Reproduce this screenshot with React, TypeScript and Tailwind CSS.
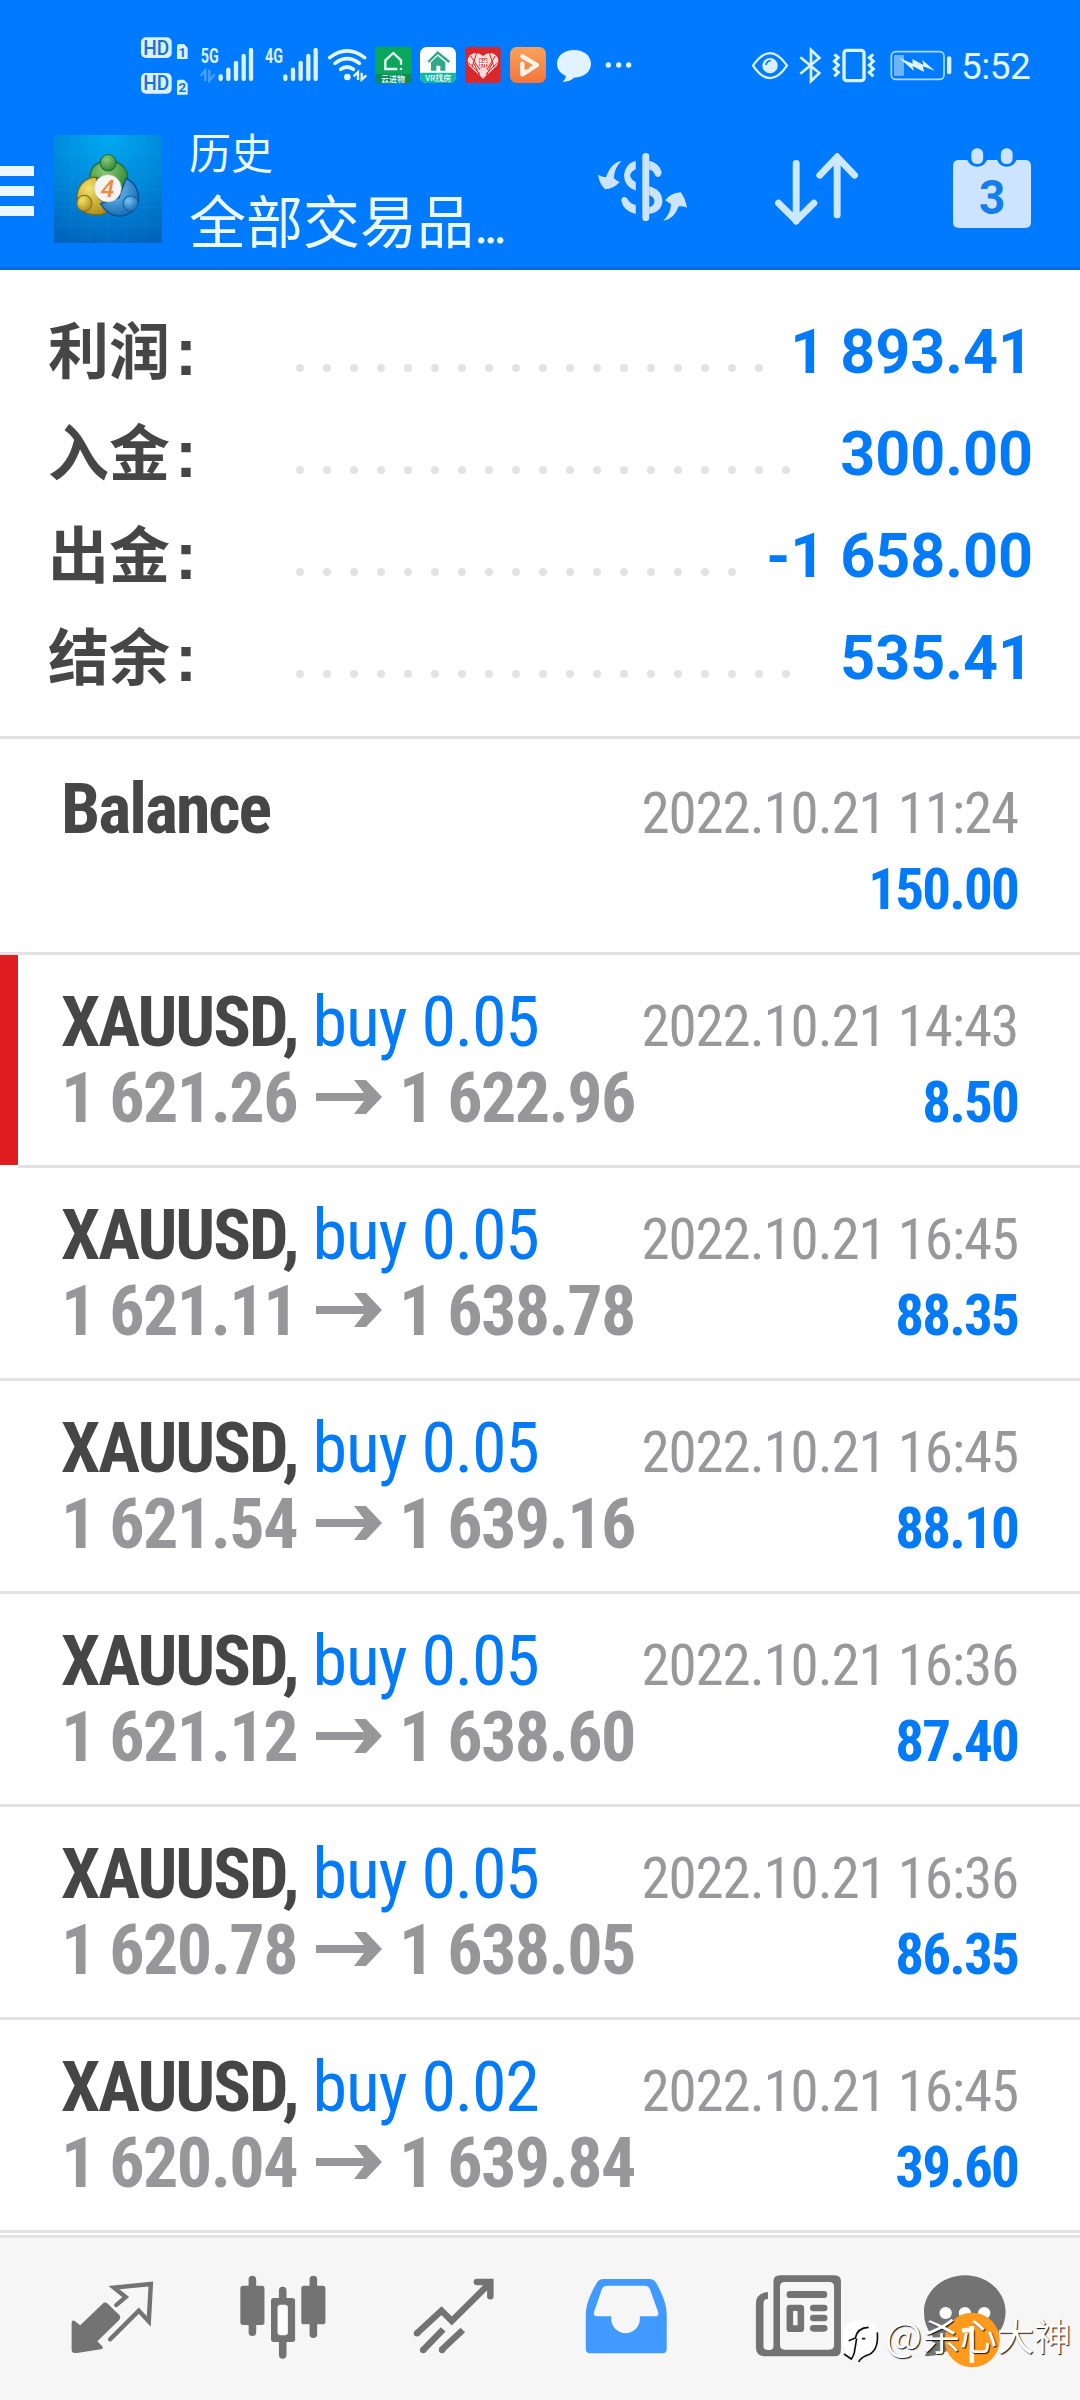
import React from 'react'

interface SummaryItem {
  label: string
  value: string
  dots: number
}

interface Deal {
  id: number
  volume: string
  open: string
  close: string
  time: string
  profit: string
  marked?: boolean
}

const SUMMARY: SummaryItem[] = [
  { label: '利润', value: '1 893.41', dots: 18 },
  { label: '入金', value: '300.00', dots: 19 },
  { label: '出金', value: '-1 658.00', dots: 17 },
  { label: '结余', value: '535.41', dots: 19 },
]

const DEALS: Deal[] = [
  { id: 1, volume: '0.05', open: '1 621.26', close: '1 622.96', time: '2022.10.21 14:43', profit: '8.50', marked: true },
  { id: 2, volume: '0.05', open: '1 621.11', close: '1 638.78', time: '2022.10.21 16:45', profit: '88.35' },
  { id: 3, volume: '0.05', open: '1 621.54', close: '1 639.16', time: '2022.10.21 16:45', profit: '88.10' },
  { id: 4, volume: '0.05', open: '1 621.12', close: '1 638.60', time: '2022.10.21 16:36', profit: '87.40' },
  { id: 5, volume: '0.05', open: '1 620.78', close: '1 638.05', time: '2022.10.21 16:36', profit: '86.35' },
  { id: 6, volume: '0.02', open: '1 620.04', close: '1 639.84', time: '2022.10.21 16:45', profit: '39.60' },
]

// 状态栏图标，画布高度统一 90px，坐标为 3 倍
function StatusIcon({ x, w, children }: { x: number; w: number; children: React.ReactNode }) {
  return (
    <svg width={w} height={90} viewBox={`${x} 0 ${w * 3} 270`} className="shrink-0" fill="none">
      {children}
    </svg>
  )
}

function SignalBars({ x }: { x: number }) {
  return (
    <g stroke="#d9f0ff" strokeWidth="13" strokeLinecap="round">
      <path d={`M${x} 169V177M${x + 23} 149V177M${x + 46} 129V177M${x + 69} 108V177M${x + 91} 90V177`} />
    </g>
  )
}

function HdIcon() {
  return (
    <StatusIcon x={60} w={55}>
      {[
        { y: 52, n: '1' },
        { y: 159, n: '2' },
      ].map((item) => (
        <g key={item.n}>
          <rect x="63" y={item.y} width="92" height="62" rx="15" fill="#d9f0ff" />
          <text
            x="109"
            y={item.y + 52}
            textAnchor="middle"
            textLength="78"
            lengthAdjust="spacingAndGlyphs"
            fontSize="60"
            className="font-['Roboto',sans-serif] font-medium"
            fill="#1672d4"
          >
            HD
          </text>
          <path d={`M171 ${item.y + 27}q0-7 7-7h14l11 12v33h-32z`} fill="#d9f0ff" />
          <text
            x="187"
            y={item.y + 58}
            textAnchor="middle"
            fontSize="40"
            className="font-['Roboto',sans-serif] font-bold"
            fill="#1672d4"
          >
            {item.n}
          </text>
        </g>
      ))}
    </StatusIcon>
  )
}

function NetworkLabel({ x, children }: { x: number; children: string }) {
  return (
    <text
      x={x}
      y="129"
      fontSize="60"
      textLength="54"
      lengthAdjust="spacingAndGlyphs"
      className="font-['Roboto',sans-serif] font-bold"
      fill="#d9f0ff"
    >
      {children}
    </text>
  )
}

function StatusBar() {
  return (
    <div className="flex h-[110px] items-start pt-5 pl-[140px]">
      <HdIcon />
      <StatusIcon x={225} w={65}>
        <NetworkLabel x={242}>5G</NetworkLabel>
        <path d="M242 167l14-16v32M268 149v32l16-18" stroke="#4a9fff" strokeWidth="7" />
        <SignalBars x={302} />
      </StatusIcon>
      <StatusIcon x={420} w={64}>
        <NetworkLabel x={435}>4G</NetworkLabel>
        <SignalBars x={496} />
      </StatusIcon>
      <StatusIcon x={612} w={48}>
        <g stroke="#e2f6ff" strokeWidth="11" strokeLinecap="round">
          <path d="M629 113Q681 72 734 113" />
          <path d="M645 130Q681 102 718 130" />
          <path d="M662 148Q681 134 700 148" />
        </g>
        <circle cx="682" cy="171" r="10" fill="#e2f6ff" />
        <path d="M701 169l13-13v24M725 158v21l14-13" stroke="#e2f6ff" strokeWidth="7" />
      </StatusIcon>

      {/* 通知应用图标 */}
      <StatusIcon x={-24} w={44}>
        <rect x="-15" y="80" width="110" height="110" rx="8" fill="#0aa65c" />
        <rect x="-15" y="162" width="110" height="28" rx="6" fill="#0b8a5a" />
        <path d="M63 134V121L40 99L16 121V147H52" stroke="#e8fff4" strokeWidth="7" />
        <circle cx="63" cy="147" r="4" fill="#e8fff4" />
        <text x="39" y="186" textAnchor="middle" fontSize="24" fill="#fff" className="font-['Noto_Sans_CJK_SC',sans-serif] font-medium">云进物</text>
      </StatusIcon>
      <StatusIcon x={108} w={45}>
        <rect x="120" y="81" width="108" height="108" rx="20" fill="#fff" />
        <path d="M120 158H228V169Q228 189 208 189H140Q120 189 120 169Z" fill="#12b8a4" />
        <path d="M153 152V127L173 108L196 127V152H181V137H169V152Z" fill="#2fa886" />
        <path d="M145 126L173 98L208 126" stroke="#2fa886" strokeWidth="7" />
        <text x="175" y="184" textAnchor="middle" fontSize="24" fill="#fff" className="font-['Noto_Sans_CJK_SC',sans-serif] font-medium">VR找房</text>
      </StatusIcon>
      <StatusIcon x={243} w={45}>
        <rect x="255" y="81" width="107" height="108" rx="10" fill="#d9272b" />
        <path d="M309 176L268 138Q257 121 270 106Q290 91 309 108Q329 91 348 106Q361 121 350 138Z" fill="#fbdcd8" />
        <path d="M272 108L300 150M346 108L320 150M265 128L300 162M353 128L318 162M290 98L276 142M328 98L342 142M300 170L282 130M318 170L336 130" stroke="#d9272b" strokeWidth="3" />
        <rect x="298" y="115" width="24" height="27" fill="#d9272b" />
        <text x="310" y="138" textAnchor="middle" fontSize="25" fill="#fff" className="font-['Noto_Sans_CJK_SC',sans-serif] font-bold">拼</text>
      </StatusIcon>
      <StatusIcon x={378} w={45}>
        <defs>
          <linearGradient id="play" x1="0" y1="0" x2="0" y2="1">
            <stop offset="0" stopColor="#f9a25c" />
            <stop offset="1" stopColor="#f4763b" />
          </linearGradient>
        </defs>
        <rect x="390" y="81" width="108" height="108" rx="20" fill="url(#play)" />
        <path d="M427 109L471 135L427 163V131" stroke="#fff5ea" strokeWidth="13" strokeLinejoin="round" strokeLinecap="round" />
        <path d="M443 130V148" stroke="#f58b49" strokeWidth="8" />
      </StatusIcon>
      <StatusIcon x={513} w={47}>
        <path d="M582 90C611 90 633 107 633 131C633 156 611 171 582 173Q570 184 548 186Q557 178 558 168C541 160 531 148 531 131C531 107 553 90 582 90Z" fill="#e1f3ff" />
      </StatusIcon>
      <StatusIcon x={654} w={38}>
        <g fill="#e1f3ff">
          <circle cx="685" cy="135" r="8" />
          <circle cx="716" cy="135" r="8" />
          <circle cx="746" cy="135" r="8" />
        </g>
      </StatusIcon>

      {/* 右侧系统图标 */}
      <div className="ml-[116px] flex">
        <StatusIcon x={66} w={44}>
          <path d="M69 137Q120 62 171 137Q120 212 69 137Z" stroke="#d9f0ff" strokeWidth="7" />
          <circle cx="120" cy="137" r="23" fill="#d9f0ff" />
          <path d="M108 135Q110 123 122 122" stroke="#007aff" strokeWidth="5" />
        </StatusIcon>
        <StatusIcon x={198} w={33}>
          <path d="M211 112L268 159L243 183V90L268 114L211 161" stroke="#d9f0ff" strokeWidth="8" />
        </StatusIcon>
        <StatusIcon x={297} w={57}>
          <rect x="342" y="91" width="60" height="91" rx="8" stroke="#d9f5ff" strokeWidth="10" />
          <path d="M313 103L325 113L313 124L325 135L313 147L325 157L313 169M430 103L418 113L430 124L418 135L430 147L418 157L430 169" stroke="#d9f5ff" strokeWidth="9" />
        </StatusIcon>
        <StatusIcon x={468} w={74}>
          <rect x="484" y="95" width="158" height="83" rx="13" stroke="#a8dcff" strokeWidth="5" />
          <rect x="492" y="105" width="30" height="63" rx="4" fill="#6db4ff" />
          <path d="M508 114L548 131L547 117L580 135L577 120L615 153L579 139L582 156L548 138L552 153Z" fill="#e2f6ff" />
          <rect x="651" y="109" width="13" height="54" rx="6" fill="#d9f0ff" />
        </StatusIcon>
        <span className="mt-[25px] ml-px font-['Roboto',sans-serif] text-[37px] leading-[44px] tracking-[-0.5px] text-[#e2f6ff]">
          5:52
        </span>
      </div>
    </div>
  )
}

function AppLogo() {
  return (
    <svg width="108" height="108" viewBox="157 73 313 326" preserveAspectRatio="none" className="mt-[25px] ml-5 shrink-0">
      <defs>
        <radialGradient id="bg" cx="0.5" cy="0" r="1.05">
          <stop offset="0" stopColor="#00aaf0" />
          <stop offset="0.55" stopColor="#0086d8" />
          <stop offset="1" stopColor="#0064be" />
        </radialGradient>
        <radialGradient id="green" cx="0.4" cy="0.3" r="0.8">
          <stop offset="0" stopColor="#8ccb78" />
          <stop offset="1" stopColor="#1f7d2a" />
        </radialGradient>
        <radialGradient id="gold" cx="0.35" cy="0.3" r="0.8">
          <stop offset="0" stopColor="#f2e26a" />
          <stop offset="1" stopColor="#a88612" />
        </radialGradient>
        <radialGradient id="azure" cx="0.35" cy="0.3" r="0.8">
          <stop offset="0" stopColor="#78c4f0" />
          <stop offset="1" stopColor="#0c62b0" />
        </radialGradient>
      </defs>
      <rect x="157" y="73" width="313" height="326" fill="url(#bg)" />
      <path d="M209 73V399M261 73V399M313 73V399M366 73V399M418 73V399M157 129H470M157 184H470M157 238H470M157 292H470M157 346H470" stroke="#46b8f0" strokeOpacity="0.18" strokeWidth="2" />
      <path d="M262 205C258 175 280 152 312 150C350 150 372 175 370 205C368 225 360 240 350 248L300 200Z" fill="url(#green)" stroke="#1c6a3a" strokeWidth="4" />
      <path d="M280 200C250 200 228 222 224 252C221 285 240 313 275 314C300 316 315 305 322 295L285 262Z" fill="url(#gold)" stroke="#6d6a1e" strokeWidth="4" />
      <path d="M366 204C390 215 403 240 402 268C398 300 375 318 345 318C320 316 302 300 292 280L345 262Z" fill="url(#azure)" stroke="#0b4f94" strokeWidth="4" />
      <ellipse cx="314" cy="157" rx="23" ry="25" fill="url(#green)" stroke="#1c6a3a" strokeWidth="3" />
      <ellipse cx="245" cy="279" rx="22" ry="24" fill="url(#gold)" stroke="#8a6d14" strokeWidth="3" />
      <ellipse cx="379" cy="280" rx="22" ry="23" fill="url(#azure)" stroke="#1260a8" strokeWidth="3" />
      <ellipse cx="313" cy="234" rx="39" ry="41" fill="#f6f4f2" stroke="#c9c9c4" strokeWidth="2" />
      <text x="312" y="260" textAnchor="middle" fontSize="72" fill="#ef8a3c" className="font-['Roboto',sans-serif] font-medium italic">4</text>
    </svg>
  )
}

function TitleBar() {
  return (
    <div className="flex h-[157px] items-start">
      <div className="mt-14 flex w-[34px] shrink-0 flex-col gap-2.5">
        <span className="h-2.5 bg-[#ebf8ff]" />
        <span className="h-2.5 bg-[#ebf8ff]" />
        <span className="h-2.5 bg-[#ebf8ff]" />
      </div>
      <AppLogo />
      <div className="mt-[13px] ml-[27px] w-[331px] font-['Noto_Sans_CJK_SC',sans-serif] whitespace-nowrap text-[#ebf9ff]">
        <div className="text-[42px] leading-[56px]">历史</div>
        <div className="mt-[3px] text-[57px] leading-[72px]">
          全部交易品<span className="font-['Roboto',sans-serif] tracking-[-5.5px]">...</span>
        </div>
      </div>

      <svg width="89" height="68" viewBox="168 128 257 204" preserveAspectRatio="none" className="mt-[43px] ml-[78px]" fill="#cce4ff">
        <rect x="296" y="128" width="20" height="204" rx="10" />
        <path d="M277 151V177Q262 184 261 195Q262 208 277 215V241Q244 230 243 195Q246 160 277 151Z" />
        <path d="M316 151Q347 160 352 186Q350 200 340 200Q333 199 331 190Q327 180 316 178Z" />
        <path fillRule="evenodd" d="M316 228Q352 238 354 272Q352 305 316 311ZM316 254V291Q331 286 331 272Q330 260 316 254Z" />
        <path d="M235 270Q236 260 245 260Q253 261 255 269Q262 281 277 284V311Q240 302 235 270Z" />
        <path d="M236 152Q206 156 191 201Q178 199 168 193Q172 220 188 237Q213 236 231 215Q222 212 214 204Q214 174 236 152Z" />
        <path d="M356 332Q378 310 379 281Q370 276 362 270Q378 248 407 246Q421 266 425 292Q415 287 401 288Q388 327 356 332Z" />
      </svg>
      <svg width="83" height="72" viewBox="684 128 239 214" preserveAspectRatio="none" className="mt-[43px] ml-[88px]" fill="none" stroke="#cce8ff" strokeWidth="20" strokeLinecap="round">
        <path d="M745 159V330M694 277L745 329L796 277" />
        <path d="M863 312V140M813 194L863 140L913 194" />
      </svg>
      <svg width="78" height="80" viewBox="1200 113 225 240" preserveAspectRatio="none" className="mt-[38px] ml-[95px]">
        <path d="M1217 149H1241Q1250 169 1270 169Q1290 169 1298 149H1327Q1335 169 1355 169Q1375 169 1383 149H1408Q1425 149 1425 166V336Q1425 353 1408 353H1217Q1200 353 1200 336V166Q1200 149 1217 149Z" fill="#cce4ff" />
        <rect x="1253" y="114" width="34" height="47" rx="16" fill="#cce4ff" />
        <rect x="1338" y="114" width="34" height="47" rx="16" fill="#cce4ff" />
        <text x="1313" y="310" textAnchor="middle" textLength="76" lengthAdjust="spacingAndGlyphs" fontSize="146" fill="#147ee8" className="font-['Roboto',sans-serif] font-bold">3</text>
      </svg>
    </div>
  )
}

function SummaryRow({ item }: { item: SummaryItem }) {
  return (
    <div className="flex h-[102px] items-center">
      <div className="flex w-[248px] shrink-0 items-center text-[#464646]">
        <span className="mb-[5px] font-['Noto_Sans_CJK_SC',sans-serif] text-[61px] leading-[97px] font-bold">{item.label}</span>
        <span className="mt-1 ml-[5px] font-['Liberation_Sans',sans-serif] text-[66px] leading-[90px] font-bold">:</span>
      </div>
      <div className="mt-[35px] flex gap-[19px]">
        {Array.from({ length: item.dots }, (_, i) => (
          <span key={i} className="h-2 w-2 rounded-full bg-[#e3e3e3]" />
        ))}
      </div>
      <span className="mt-[3px] ml-auto font-['Roboto',sans-serif] text-[61px] leading-[98px] font-bold text-[#037af8]">
        {item.value}
      </span>
    </div>
  )
}

function BalanceRow() {
  return (
    <div className="h-[216px] border-b-[3px] border-[#e3e3e3] pt-8 pr-[62px] pl-[61px]">
      <div className="flex h-[76px] items-baseline justify-between leading-[76px]">
        <span className="text-[70px] font-bold tracking-[-2px] text-[#464646]">Balance</span>
        <span className="text-[57px] tracking-[-1.1px] text-[#98989b]">2022.10.21 11:24</span>
      </div>
      <div className="flex h-[76px] items-baseline justify-between leading-[76px]">
        <span className="text-[70px]">&nbsp;</span>
        <span className="text-[57px] font-bold tracking-[-1.8px] text-[#037af8]">150.00</span>
      </div>
    </div>
  )
}

function DealRow({ deal }: { deal: Deal }) {
  return (
    <div className="flex h-[213px]">
      <div className={deal.marked ? 'h-[210px] w-[18px] bg-[#e21d21]' : 'w-[18px] border-b-[3px] border-[#e3e3e3]'} />
      <div className="flex-1 border-b-[3px] border-[#e3e3e3] pt-[29px] pr-[62px] pl-[43px]">
        <div className="flex h-[76px] items-baseline justify-between leading-[76px]">
          <div className="text-[70px]">
            <span className="font-bold tracking-[-2px] text-[#464646]">XAUUSD,</span>
            <span className="ml-[15px] tracking-[-1.2px] text-[#037af8]">buy {deal.volume}</span>
          </div>
          <span className="text-[57px] tracking-[-1.1px] text-[#98989b]">{deal.time}</span>
        </div>
        <div className="flex h-[76px] items-baseline justify-between leading-[76px]">
          <div className="flex items-baseline text-[70px] font-bold tracking-[-1.6px] text-[#97979a]">
            <span>{deal.open}</span>
            <svg width="66" height="42" viewBox="0 0 66 42" className="mr-[17px] ml-[19px] shrink-0" fill="#97979a">
              <path d="M0 13H48L38 0H50L66 17L50 34H38L48 21H0Z" />
            </svg>
            <span>{deal.close}</span>
          </div>
          <span className="text-[57px] font-bold tracking-[-1.8px] text-[#037af8]">{deal.profit}</span>
        </div>
      </div>
    </div>
  )
}

function NavIcon({ x, children }: { x: number; children: React.ReactNode }) {
  return (
    <svg width="171" height="162" viewBox={`${x} 114 496.6 486`} preserveAspectRatio="none" fill="#737373">
      {children}
    </svg>
  )
}

function BottomNav() {
  return (
    <nav className="flex h-[165px] border-t-[3px] border-[#e3e3e3] bg-[#f6f6f6] pl-[27px]">
      {/* 行情 */}
      <NavIcon x={78.4}>
        <path d="M208 367Q208 360 216 362L233 376L298 311Q305 304 313 311L347 346Q352 353 346 360L283 424L298 440Q300 446 293 448L224 459Q208 461 208 450Z" />
        <path d="M338 315L365 291L331 263L438 252L432 364L403 332L320 418" fill="none" stroke="#737373" strokeWidth="13" strokeLinecap="round" />
      </NavIcon>
      {/* 图表 */}
      <NavIcon x={575}>
        <path d="M733 238V397M910 238V403M821 271V300M821 420V465" stroke="#737373" strokeWidth="22" strokeLinecap="round" />
        <rect x="698" y="257" width="70" height="118" rx="8" />
        <rect x="875" y="257" width="70" height="116" rx="8" />
        <rect x="787" y="294" width="70" height="132" rx="8" />
        <rect x="806" y="314" width="30" height="92" rx="9" fill="#fff" />
      </NavIcon>
      {/* 交易 */}
      <NavIcon x={1071.6}>
        <g fill="none" stroke="#737373" strokeWidth="19">
          <path d="M1211 400L1282 332L1312 363L1420 252" strokeLinejoin="miter" />
          <path d="M1385 246H1424V289" strokeLinecap="round" />
          <path d="M1287 388L1229 450M1344 390L1282 450" />
        </g>
        <circle cx="1211" cy="400" r="9.5" />
        <circle cx="1229" cy="450" r="9.5" />
        <circle cx="1284" cy="450" r="9.5" />
      </NavIcon>
      {/* 历史 */}
      <NavIcon x={0}>
        <path
          fill="#419aff"
          fillRule="evenodd"
          d="M184 237H317Q330 237 337 248C352 276 368 310 368 345V446Q368 460 354 460H147Q133 460 133 446V345C133 310 150 275 165 248Q171 237 184 237ZM195 257Q184 257 180 266L157 336Q154 349 166 349H207V357A41 42 0 0 0 290 357V349H335Q346 349 343 336L319 267Q315 257 303 257Z"
        />
      </NavIcon>
      {/* 新闻 */}
      <NavIcon x={496.6}>
        <path
          fillRule="evenodd"
          d="M697 226H855Q874 226 874 245V449Q874 469 855 469H653Q627 469 627 442V310Q628 279 662 276V297Q649 297 649 310V439Q649 450 662 450H666Q678 450 678 438V245Q678 226 697 226ZM711 246Q697 246 697 260V435Q697 449 711 449H840Q854 449 854 435V260Q854 246 840 246Z"
        />
        <rect x="716" y="273" width="118" height="21" rx="10" />
        <path fillRule="evenodd" d="M726 314H757Q767 314 767 324V386Q767 396 757 396H726Q716 396 716 386V324Q716 314 726 314ZM735 333V376H748V333Z" />
        <rect x="784" y="314" width="51" height="20" rx="10" />
        <rect x="784" y="344" width="51" height="20" rx="10" />
        <rect x="784" y="375" width="51" height="20" rx="10" />
      </NavIcon>
      {/* 信息 */}
      <NavIcon x={993.2}>
        <path d="M1235 226C1300 226 1352 275 1352 335C1352 400 1300 444 1235 444Q1215 444 1200 440Q1170 466 1122 469Q1114 468 1121 461Q1142 440 1140 408Q1115 380 1115 335C1115 275 1168 226 1235 226Z" />
        <circle cx="1178" cy="339" r="18" fill="#fff" />
        <circle cx="1234" cy="339" r="18" fill="#fff" />
        <circle cx="1290" cy="339" r="18" fill="#fff" />
        <ellipse cx="1255" cy="420" rx="80" ry="82" fill="#ff9a1c" />
        <path d="M1254 378V488M1225 392L1254 388" stroke="#fff" strokeWidth="13" />
      </NavIcon>
    </nav>
  )
}

function Watermark() {
  return (
    <div className="absolute right-[9px] bottom-[35px] flex items-center">
      <svg width="42" height="46" viewBox="30 144 126 138" className="mr-[3px]">
        <path d="M92 152C130 150 144 170 144 204C144 240 130 258 100 262L87 280V265Q72 250 66 268Q38 250 38 208C38 172 55 152 92 152Z" fill="#fff" />
        <path d="M142 190Q147 250 108 260Q92 266 86 279M56 215L76 207Q82 176 116 175M80 208L73 250Q70 262 64 270L42 255M96 209H106" fill="none" stroke="#111" strokeWidth="5" />
      </svg>
      <span className="mb-2.5 font-['Noto_Sans_CJK_SC',sans-serif] text-[37px] leading-[40px] font-normal whitespace-nowrap text-white [text-shadow:1px_1px_1px_#111]">
        <span className="mr-px text-[39px]">@</span>杀心大神
      </span>
    </div>
  )
}

export default function App() {
  return (
    <div className="relative flex h-[2400px] w-[1080px] flex-col overflow-hidden bg-white">
      <header className="h-[270px] shrink-0 border-b-[3px] border-[#0b6ad8] bg-[#007aff]">
        <StatusBar />
        <TitleBar />
      </header>

      {/* 汇总 */}
      <section className="h-[469px] shrink-0 border-b-[3px] border-[#e3e3e3] pt-[29px] pr-[47px] pl-[48px]">
        {SUMMARY.map((item) => (
          <SummaryRow key={item.label} item={item} />
        ))}
      </section>

      {/* 成交列表 */}
      <main className="shrink-0 pb-0.5 font-['Roboto_Condensed','Roboto',sans-serif] [font-stretch:75%]">
        <BalanceRow />
        {DEALS.map((deal) => (
          <DealRow key={deal.id} deal={deal} />
        ))}
      </main>

      <BottomNav />
      <Watermark />
    </div>
  )
}
